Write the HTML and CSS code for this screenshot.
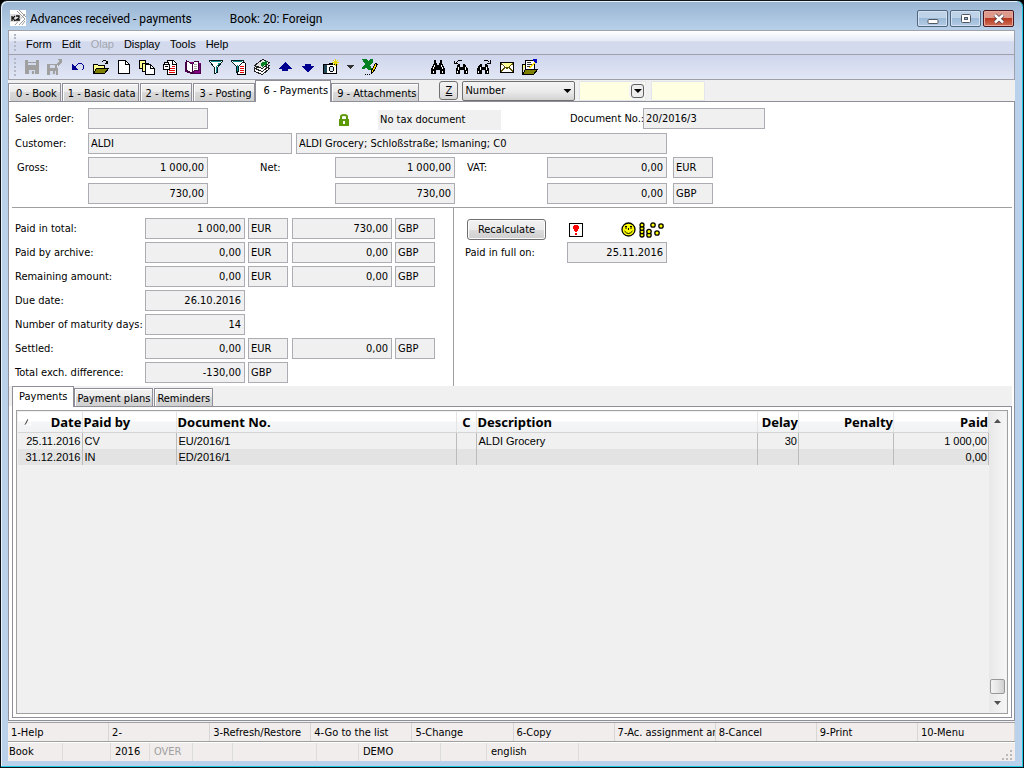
FILE: index.html
```html
<!DOCTYPE html>
<html lang="en">
<head>
<meta charset="utf-8">
<title>Advances received - payments</title>
<link rel="stylesheet" href="styles.css">
</head>
<body>
<div class="window">
  <header class="titlebar">
    <svg class="app-icon" width="16" height="16" viewBox="0 0 16 16"><rect width="16" height="16" fill="#fff"/><path d="M7 1L15 9M9 0L16 7M5 15L15 4M9 15L15 9M12 15l3-4" stroke="#999" stroke-width="1" fill="none"/><path d="M0 4h9l3 4-3 4H0z" fill="#ddd"/><path d="M2 6v5M5 6L3 8l2 3M6 6h3v2L6 10h4" stroke="#111" stroke-width="1.3" fill="none"/></svg>
    <h1 class="title">Advances received - payments</h1>
    <span class="title-book">Book: 20: Foreign</span>
    <div class="win-buttons">
      <button class="win-btn" aria-label="Minimize"><svg width="12" height="12" viewBox="0 0 12 12"><rect x="1" y="6.500" width="10" height="4" rx="1" fill="#fff" stroke="#53575f"/></svg></button>
      <button class="win-btn" aria-label="Maximize"><svg width="12" height="12" viewBox="0 0 12 12"><rect x="1.500" y="1.500" width="9" height="8" rx="1" fill="#fff" stroke="#53575f"/><rect x="4.500" y="4.500" width="3" height="2" fill="#8fb0d0" stroke="#53575f"/></svg></button>
      <button class="win-btn close" aria-label="Close"><svg width="12" height="12" viewBox="0 0 12 12"><path d="M2 2l8 7.500M10 2L2 9.500" stroke="#53404a" stroke-width="4"/><path d="M2 2l8 7.500M10 2L2 9.500" stroke="#fff" stroke-width="2.400"/></svg></button>
    </div>
  </header>

  <div class="client">
    <nav class="menubar">
      <button>Form</button><button>Edit</button><button disabled>Olap</button><button>Display</button><button>Tools</button><button>Help</button>
    </nav>

    <div class="toolbar" role="toolbar">
      <button class="tool" aria-label="Save"><svg viewBox="0 0 16 16"><path d="M1 1h13l1 1v13H1z" fill="#a0a0a0"/><path d="M4 1h8v5H4zM5 11h6v4H5z" fill="#d5dbee"/><path d="M4 3h8v1H4zM8 12h2v3H8z" fill="#a0a0a0"/></svg></button>
      <button class="tool" aria-label="Save and close"><svg viewBox="0 0 16 16"><path d="M0 5h10v4h1v7H0zM10 0h5v5l-1-1-3 3-2-2 3-3z" fill="#a0a0a0"/><path d="M3 6h5v3H3zM3 12h6v4H3z" fill="#d5dbee"/><path d="M6 12h2v3H6z" fill="#a0a0a0"/></svg></button>
      <button class="tool" aria-label="Undo"><svg viewBox="0 0 16 16"><path d="M2 5v6h6z" fill="#000090"/><path d="M4.500 8.500l4-4h3l2 2v3l-2 2" fill="none" stroke="#000090"/></svg></button>
      <button class="tool" aria-label="Open"><svg viewBox="0 0 16 16"><path d="M.5 14.500v-9h4l1 1h6v3" fill="#ffff90" stroke="#000"/><path d="M.5 14.500l3-5h12l-4 5z" fill="#808000" stroke="#000"/><path d="M8.500 3.500l2-2h2l2 3M11.500 4.500h3v-3" fill="none" stroke="#000"/></svg></button>
      <button class="tool" aria-label="New"><svg viewBox="0 0 16 16"><path d="M2.500 1.500h7l4 4v9h-11z" fill="#fff" stroke="#000"/><path d="M9.500 1.500v4h4" fill="none" stroke="#000"/></svg></button>
      <button class="tool" aria-label="Copy record"><svg viewBox="0 0 16 16"><path d="M.5 1.500h6v8h-6z" fill="#ffff90" stroke="#000"/><path d="M3.500 4.500h6v8h-6z" fill="#ffff90" stroke="#000"/><path d="M6.500 5.500h5l4 4v6h-9z" fill="#fff" stroke="#000"/><path d="M11.500 5.500v4h4" fill="none" stroke="#000"/></svg></button>
      <button class="tool" aria-label="Locked document"><svg viewBox="0 0 16 16"><path d="M5.500 1.500h6l3 3v11h-9z" fill="#fff" stroke="#000"/><path d="M10.500 1.500v4h4" fill="none" stroke="#000"/><path d="M10 7.500h3M7 9.500h6M7 11.500h6M7 13.500h6" stroke="#e00000"/><path d="M2.500 5.500v-2h4v2M1.500 5.500h6v5h-6z" fill="#fff" stroke="#000"/><path d="M3 7.500h3" stroke="#000"/></svg></button>
      <button class="tool" aria-label="Book"><svg viewBox="0 0 16 16"><path d="M.5 2.500v10l6 2h9v-10" fill="#800080" stroke="#500050"/><path d="M1.500 1.500l6 4v9l-6-3zM7.500 5.500l2-3h4v9h-4l-2 3z" fill="#fff" stroke="#400040"/><path d="M9 5.500h3M9 7.500h3M9 9.500h3" stroke="#aaa"/></svg></button>
      <button class="tool" aria-label="Filter"><svg viewBox="0 0 16 16"><path d="M1.500 1.500h13v1l-5 6v5l-3 1v-6l-5-6z" fill="#fff" stroke="#002020"/><path d="M3 2.500h10M11.500 4L8.500 8v5" fill="none" stroke="#109090"/></svg></button>
      <button class="tool" aria-label="Filter document"><svg viewBox="0 0 16 16"><path d="M7.500 3.500h6l1 1v11h-8z" fill="#fff" stroke="#000"/><path d="M9 7.500h4M9 9.500h4M9 11.500h4M9 13.500h4" stroke="#e00000"/><path d="M.5 1.500h12v1l-5 5v5l-2 1v-6l-5-5z" fill="#fff" stroke="#002020"/><path d="M2 2.500h9M6.500 6v6" stroke="#109090"/></svg></button>
      <button class="tool" aria-label="Books"><svg viewBox="0 0 16 16"><path d="M.5 10.500l7-5 8 4-7 6-8-3zM.5 8.500l7-5 8 3-7 6-8-3z" fill="#fff" stroke="#222"/><path d="M.5 6.500l8-6 7 3-7 6z" fill="#e4e4e4" stroke="#222"/><path d="M6 4l7-2-1 6-2-2-2 2-2-2 2-1z" fill="#008020"/></svg></button>
      <button class="tool" aria-label="Previous"><svg viewBox="0 0 16 16"><path d="M8 3L1 10h4v2h6v-2h4z" fill="#000090"/></svg></button>
      <button class="tool" aria-label="Next"><svg viewBox="0 0 16 16"><path d="M8 13L1 7h4V5h6v2h4z" fill="#000090"/></svg></button>
      <button class="tool" aria-label="Snapshot"><svg viewBox="0 0 16 16"><path d="M.5 5.500h13v9H.5z" fill="#fff" stroke="#000"/><path d="M1 6h3v8H1z" fill="#204858"/><path d="M6 4h4v1H6z" fill="#000"/><circle cx="8.500" cy="10" r="2.500" fill="#cfe8f0" stroke="#000"/><path d="M12.500 0v7M9 3.500h7M10 1l5 5M15 1l-5 5" stroke="#e8d800"/></svg></button>
      <button class="tool caret" aria-label="Snapshot options"><svg viewBox="0 0 16 16"><path d="M4 6h8l-4 4z" fill="#333"/></svg></button>
      <button class="tool" aria-label="Export to Excel"><svg viewBox="0 0 16 16"><path d="M0 0h5l2 3 1-3h3v3L8 6l3 5H6L4 8l-2 2H0V8l3-3z" fill="#008020"/><path d="M9.500 11.500l4-7 2 1-4 7-2 2z" fill="#ffe000" stroke="#000"/><path d="M3 15.500h1M5 15.500h1M7 15.500h1" stroke="#000"/></svg></button>
      <button class="tool find" aria-label="Find"><svg viewBox="0 0 16 16"><path d="M4 1h2v3h1v2h2V4h1V1h2v3l3 6v5h-5v-4H6v4H1v-5l3-6z" fill="#000"/><path d="M4.500 6l-1 4M11.500 6l1 4M3.500 12v2M12.500 12v2" stroke="#fff"/></svg></button>
      <button class="tool" aria-label="Find previous"><svg viewBox="0 0 16 16"><path d="M5 5h2v3h3V5h2l3 5v5h-4v-4H7v4H3v-5z" fill="#000"/><path d="M5.500 8v3M12.500 8v3M4.500 12v2M13.500 12v2" stroke="#fff"/><path d="M3.500 5V3.500l2-2h3l1 1M1.500 2v2.500h3" stroke="#000" fill="none"/></svg></button>
      <button class="tool" aria-label="Find next"><svg viewBox="0 0 16 16"><path d="M4 5h2v3h3V5h2l2 5v5H9v-4H6v4H1v-5z" fill="#000"/><path d="M4.500 8v3M10.500 8v3M2.500 12v2M11.500 12v2" stroke="#fff"/><path d="M7.500 2.500l1-1h3l2 2M11 4.500h3.500V1" stroke="#000" fill="none"/></svg></button>
      <button class="tool" aria-label="Mail"><svg viewBox="0 0 16 16"><path d="M1.500 3.500h13v10h-13z" fill="#fff" stroke="#000"/><path d="M3 4h10L8 9z" fill="#ffff90"/><path d="M2 4.500l6 5 6-5M2 12.500l4-4M14 12.500l-4-4" fill="none" stroke="#605000"/></svg></button>
      <button class="tool" aria-label="Notes"><svg viewBox="0 0 16 16"><path d="M.5 14.500v-9h3" fill="#ffff80" stroke="#000"/><path d="M3.500 10.500v-9h9v9z" fill="#fff" stroke="#000"/><path d="M5 3.500h4M5 5.500h5M5 7.500h4" stroke="#333"/><path d="M.5 15.500l3-5h12l-4 5z" fill="#808000" stroke="#000"/><path d="M7 9l5-6 1 1-5 5z" fill="#ffe000"/><path d="M11 0h4v4h-2l-2-2z" fill="#0000c0"/></svg></button>
    </div>

    <div class="tabrow">
      <div class="tabs" role="tablist">
        <button class="tab" role="tab">0 - Book</button><button class="tab" role="tab">1 - Basic data</button><button class="tab" role="tab">2 - Items</button><button class="tab" role="tab">3 - Posting</button><button class="tab active" role="tab" aria-selected="true">6 - Payments</button><button class="tab" role="tab">9 - Attachments</button>
      </div>
      <button class="z-btn">Z</button>
      <div class="sort-box"><select aria-label="Sort by"><option>Number</option></select></div>
      <div class="combo"><input type="text" aria-label="Filter from"><button aria-label="Choose value"></button></div>
      <input class="filter-to" type="text" aria-label="Filter to">
    </div>

    <main class="page">
      <section class="summary">
        <div class="line">
          <label class="lead" for="order">Sales order:</label><input class="field w120" id="order" readonly>
          <svg class="lock" width="12" height="14" viewBox="0 0 12 14"><path d="M3 7V3.500Q3 2 6 2t3 1.500V7" fill="none" stroke="#5c9a0a" stroke-width="2"/><rect x="1" y="6" width="10" height="7" fill="#5c9a0a"/><rect x="5" y="8" width="2" height="3" fill="#fff"/></svg>
          <output class="tax">No tax document</output>
          <label class="docno-label" for="docno">Document No.:</label><input class="field docno" id="docno" value="20/2016/3" readonly>
        </div>
        <div class="line customer-line">
          <label class="lead" for="cust">Customer:</label><input class="field customer" id="cust" value="ALDI" readonly><input class="field address" aria-label="Customer address" value="ALDI Grocery; Schloßstraße; Ismaning; C0" readonly>
        </div>
        <div class="line">
          <label class="lead inset" for="gross">Gross:</label><input class="field w120 num" id="gross" value="1 000,00" readonly>
          <label class="net" for="net">Net:</label><input class="field w120 num" id="net" value="1 000,00" readonly>
          <label class="vat" for="vat">VAT:</label><input class="field w120 num" id="vat" value="0,00" readonly><input class="field cur spaced" aria-label="Currency" value="EUR" readonly>
        </div>
        <div class="line home">
          <span class="lead"></span><input class="field w120 num" aria-label="Gross, home currency" value="730,00" readonly>
          <span class="net"></span><input class="field w120 num" aria-label="Net, home currency" value="730,00" readonly>
          <span class="vat"></span><input class="field w120 num" aria-label="VAT, home currency" value="0,00" readonly><input class="field cur spaced" aria-label="Home currency" value="GBP" readonly>
        </div>
      </section>

      <div class="details">
        <section class="totals">
          <label for="t1">Paid in total:</label><input class="field num" id="t1" value="1 000,00" readonly><input class="field" aria-label="Currency" value="EUR" readonly><input class="field num second" aria-label="Paid in total, home" value="730,00" readonly><input class="field" aria-label="Home currency" value="GBP" readonly>
          <label for="t2">Paid by archive:</label><input class="field num" id="t2" value="0,00" readonly><input class="field" aria-label="Currency" value="EUR" readonly><input class="field num second" aria-label="Paid by archive, home" value="0,00" readonly><input class="field" aria-label="Home currency" value="GBP" readonly>
          <label for="t3">Remaining amount:</label><input class="field num" id="t3" value="0,00" readonly><input class="field" aria-label="Currency" value="EUR" readonly><input class="field num second" aria-label="Remaining amount, home" value="0,00" readonly><input class="field" aria-label="Home currency" value="GBP" readonly>
          <label for="t4">Due date:</label><input class="field num" id="t4" value="26.10.2016" readonly>
          <label for="t5">Number of maturity days:</label><input class="field num" id="t5" value="14" readonly>
          <label for="t6">Settled:</label><input class="field num" id="t6" value="0,00" readonly><input class="field" aria-label="Currency" value="EUR" readonly><input class="field num second" aria-label="Settled, home" value="0,00" readonly><input class="field" aria-label="Home currency" value="GBP" readonly>
          <label for="t7">Total exch. difference:</label><input class="field num" id="t7" value="-130,00" readonly><input class="field" aria-label="Home currency" value="GBP" readonly>
        </section>
        <section class="status">
          <div class="status-row">
            <button class="recalc">Recalculate</button>
            <svg class="alert" width="14" height="14" viewBox="0 0 14 14" shape-rendering="crispEdges"><rect x=".5" y=".5" width="13" height="13" fill="#fff" stroke="#000"/><path d="M5 2h4v1h1v3H9v2H8v1H6V8H5V6H4V3h1zM6 10h2v2H6z" fill="#f00"/></svg>
            <svg class="smiley" width="44" height="16" viewBox="0 0 44 16"><g fill="#ff0" stroke="#000" stroke-width="1.300"><circle cx="7.500" cy="7.500" r="6.500"/><circle cx="21" cy="13" r="2"/><circle cx="21" cy="9.700" r="2"/><circle cx="21" cy="6.300" r="2"/><circle cx="21" cy="3" r="2"/><circle cx="28" cy="13" r="2.200"/><circle cx="28" cy="9.500" r="2.200"/><circle cx="32" cy="3" r="2.200"/><circle cx="40" cy="4" r="2.200"/><circle cx="36" cy="11" r="2.200"/></g><path d="M4 4.500h2M9 4.500h2M5 4v3M10 4v3M7.500 6v2M3.500 9q4 5 8 0" fill="none" stroke="#000"/></svg>
          </div>
          <div class="status-row">
            <label class="paid-label" for="paidon">Paid in full on:</label><input class="field num paidon" id="paidon" value="25.11.2016" readonly>
          </div>
        </section>
      </div>

      <div class="subtabs" role="tablist">
        <button class="tab active" role="tab" aria-selected="true">Payments</button><button class="tab" role="tab">Payment plans</button><button class="tab" role="tab">Reminders</button>
      </div>
      <section class="subpanel">
        <div class="listbox">
          <div class="list">
            <table>
              <colgroup><col class="c-date"><col class="c-by"><col class="c-doc"><col class="c-c"><col><col class="c-delay"><col class="c-pen"><col class="c-paid"></colgroup>
              <thead><tr><th class="r"><span class="head-date"><svg width="9" height="8" viewBox="0 0 9 8"><path d="M1 7l3-6" stroke="#333" fill="none"/><path d="M4 1l3 6H1" stroke="#fff" fill="none"/></svg>Date</span></th><th>Paid by</th><th>Document No.</th><th class="mid">C</th><th>Description</th><th class="r">Delay</th><th class="r">Penalty</th><th class="r">Paid</th></tr></thead>
              <tbody>
                <tr><td class="r">25.11.2016</td><td>CV</td><td>EU/2016/1</td><td></td><td>ALDI Grocery</td><td class="r">30</td><td></td><td class="r">1 000,00</td></tr>
                <tr><td class="r">31.12.2016</td><td>IN</td><td>ED/2016/1</td><td></td><td></td><td class="r"></td><td></td><td class="r">0,00</td></tr>
              </tbody>
            </table>
          </div>
          <div class="scroll">
            <button aria-label="Scroll up"><svg width="7" height="4" viewBox="0 0 7 4"><path d="M0 4h7L3.500 0z" fill="#505050"/></svg></button>
            <div class="thumb"></div>
            <button aria-label="Scroll down"><svg width="7" height="4" viewBox="0 0 7 4"><path d="M0 0h7L3.500 4z" fill="#505050"/></svg></button>
          </div>
        </div>
      </section>
    </main>

    <div class="fkeys">
      <button>1-Help</button><button>2-</button><button>3-Refresh/Restore</button><button>4-Go to the list</button><button>5-Change</button><button>6-Copy</button><button>7-Ac. assignment an</button><button>8-Cancel</button><button>9-Print</button><button>10-Menu</button>
    </div>
    <footer class="statusbar">
      <span>Book</span><span></span><span>2016</span><span class="off">OVER</span><span></span><span></span><span></span><span>DEMO</span><span></span><span>english</span><span class="rest"></span>
      <svg class="grip" width="12" height="12" viewBox="0 0 12 12"><path d="M9 1h2v2H9zM5 5h2v2H5zM9 5h2v2H9zM1 9h2v2H1zM5 9h2v2H5zM9 9h2v2H9z" fill="#b8b8b8"/></svg>
    </footer>
  </div>
</div>
</body>
</html>
```

FILE: styles.css
```css
* { box-sizing: border-box; }

html, body { height: 100%; margin: 0; }

body {
  background: #000;
  color: #000;
  font: 11px/14px "DejaVu Sans Condensed", "Noto Sans", sans-serif;
}

button, input, select {
  margin: 0;
  padding: 0;
  border: 0;
  border-radius: 0;
  background: none;
  color: inherit;
  font: inherit;
}

.window {
  display: flex;
  flex-direction: column;
  min-height: 100vh;
  padding: 0 7px 6px 6px;
  border: 1px solid #101418;
  border-radius: 7px 7px 0 0;
  box-shadow: inset 0 -1px 0 #20c8e8, inset -1px 0 0 #20c8e8, inset 1px 1px 0 #e8f2fb;
  background: linear-gradient(#98b4d2 0, #b9d1ea 30px, #b9d1ea 100%);
}

/* Title bar */
.titlebar { display: flex; align-items: flex-start; height: 29px; padding: 0 2px 0 3px; }
.app-icon { margin-top: 9px; }
.title, .title-book { margin: 10px 0 0 4px; font: 12px/17px Roboto, "Noto Sans", sans-serif; }
.title-book { margin-left: 38px; }
.win-buttons { display: flex; gap: 2px; margin: 9px 0 0 auto; }
.win-btn {
  display: flex;
  align-items: center;
  justify-content: center;
  width: 31px;
  height: 17px;
  border: 1px solid #52667e;
  border-radius: 2px;
  box-shadow: inset 0 0 0 1px #d3e2f2;
  background: linear-gradient(#bfd3e8 0 45%, #9bb9d8 50%, #b5cde6);
}
.win-btn.close {
  border-color: #4a1620;
  box-shadow: inset 0 0 0 1px #e8a89c;
  background: linear-gradient(#dd9a8c 0 45%, #b83820 50%, #d07058);
}

.client {
  display: flex;
  flex: 1;
  flex-direction: column;
  margin: 0 1px;
  background: #f0f0f0;
}

/* Menu and tool bars */
.menubar, .toolbar {
  position: relative;
  display: flex;
  align-items: center;
  border: 1px solid #a0a0a8;
}
.menubar { height: 25px; padding: 2px 0 0 9px; background: linear-gradient(#fff, #e4e9f5 45%, #d3daed 46%); }
.toolbar { height: 25px; padding-left: 11px; border-top: 0; background: linear-gradient(#cfd6ec, #e2e7f5); }
.menubar::before, .toolbar::before {
  content: "";
  position: absolute;
  left: 5px;
  top: 3px;
  bottom: 3px;
  border-left: 2px dotted #b4b8c4;
}
.menubar button { padding: 0 7px 0 8px; font: 11px/14px "Liberation Sans", sans-serif; }
.menubar button + button { padding-left: 3px; }
.menubar button:disabled { color: #a4a6ae; }
.tool { display: flex; align-items: center; justify-content: center; width: 23px; height: 23px; }
.tool svg { width: 16px; height: 16px; shape-rendering: crispEdges; }
.tool.caret { width: 16px; }
.tool.find { margin-left: 45px; }

/* Page tabs */
.tabrow { display: flex; align-items: flex-end; height: 22px; border-bottom: 1px solid #8e8f99; }
.tabs, .subtabs { display: flex; align-items: flex-end; }
.tab {
  height: 18px;
  padding: 2px 2px 0;
  border: 1px solid #8e8f99;
  border-bottom: 0;
  box-shadow: inset 1px 1px 0 #fff;
  background: linear-gradient(#f3f3f3, #ebebeb 45%, #dadada 50%, #cfcfcf);
  white-space: nowrap;
}
.tabs .tab { padding: 2px 2px 0 5px; }
.tabs .tab:first-child { padding: 2px 3px 0 7px; }
.tabs .tab + .tab, .subtabs .tab + .tab { margin-left: 1px; }
.tab.active, .tabs .tab.active {
  height: 22px;
  margin: 0 -1px -1px 0;
  background: #fff;
  z-index: 1;
}
.tabs .tab.active { padding: 0 2px 1px 8px; margin-left: 0; }
.z-btn {
  width: 19px;
  height: 19px;
  margin: 0 4px 1px 20px;
  border: 1px solid #707070;
  border-radius: 3px;
  background: linear-gradient(#f4f4f4, #e8e8e8 50%, #d6d6d6);
  text-decoration: underline;
}
.sort-box { position: relative; width: 113px; height: 20px; }
.sort-box select {
  width: 100%;
  height: 20px;
  padding: 0 2px;
  border: 1px solid #707070;
  border-radius: 2px;
  appearance: none;
  background: linear-gradient(#f4f4f4, #ebebeb 50%, #d4d4d4);
}
.sort-box::after, .combo button::after {
  content: "";
  width: 8px;
  height: 4px;
  background: #000;
  clip-path: polygon(0 0, 100% 0, 50% 100%);
}
.sort-box::after { position: absolute; right: 4px; top: 8px; pointer-events: none; }
.combo, .filter-to { height: 20px; margin: 0 0 0 4px; border: 1px solid #e2e6ec; background: #ffffe1; }
.combo { display: flex; align-items: center; width: 67px; padding-right: 1px; }
.combo input { flex: 1; min-width: 0; height: 18px; }
.combo button {
  display: flex;
  align-items: center;
  justify-content: center;
  width: 13px;
  height: 14px;
  border: 1px solid #606060;
  border-radius: 3px;
  background: #eee;
  box-shadow: 0 0 0 2px #f4f4f4;
}
.filter-to { width: 54px; margin-left: 5px; }

/* Form page */
.page {
  display: flex;
  flex: 1;
  flex-direction: column;
  padding: 0 2px 2px 0;
  border: 1px solid #8e8f99;
  border-top: 0;
  background: #fff;
}
.field {
  height: 21px;
  min-width: 0;
  padding: 0 2px;
  border: 1px solid #abadb3;
  background: #f0f0f0;
}
.num { padding-right: 3px; text-align: right; }
.summary {
  display: flex;
  flex-direction: column;
  gap: 3px;
  margin-left: 3px;
  padding: 6px 0 3px 3px;
  border-bottom: 1px solid #a0a0a0;
}
.line { display: flex; align-items: center; height: 21px; }
.line.customer-line { margin-top: 1px; }
.line.home { margin-top: 2px; }
.lead { width: 73px; }
.lead.inset { padding-left: 2px; }
.w120 { width: 120px; }
.lock { margin: 2px 28px 0 130px; }
.tax { width: 123px; height: 20px; margin-top: 2px; padding: 3px 2px; background: #f0f0f0; }
.docno-label { width: 142px; padding-left: 69px; white-space: nowrap; }
.docno { width: 122px; }
.customer { width: 204px; }
.address { width: 371px; margin-left: 4px; }
.net { width: 127px; padding-left: 52px; }
.vat { width: 92px; padding-left: 12px; }
.cur { width: 40px; }
.spaced { margin-left: 6px; }

.details { display: flex; }
.totals {
  display: grid;
  grid-template-columns: 127px 100px 40px 101px 40px;
  gap: 3px;
  align-items: center;
  width: 445px;
  padding: 10px 0 3px 6px;
  border-right: 1px solid #a0a0a0;
}
.totals label { grid-column: 1; white-space: nowrap; }
.second { margin-left: 1px; }
.status { padding: 10px 0 0 11px; }
.status-row { display: flex; align-items: center; height: 23px; }
.recalc {
  width: 79px;
  height: 21px;
  margin-left: 2px;
  border: 1px solid #707070;
  border-radius: 3px;
  box-shadow: inset 0 0 0 1px #fcfcfc;
  background: linear-gradient(#f2f2f2, #ebebeb 50%, #dddddd 51%, #cfcfcf);
}
.alert { margin-left: 23px; }
.smiley { margin-left: 38px; }
.paid-label { width: 102px; }
.paidon { width: 100px; }

/* Lower tabs and list */
.subtabs { height: 20px; padding-left: 3px; background: #f0f0f0; }
.subtabs .tab.active { height: 21px; padding: 0 6px 1px; margin-left: 0; }
.subpanel {
  display: flex;
  flex: 1;
  margin-left: 3px;
  padding: 3px;
  border: 1px solid #8e8f99;
}
.listbox { display: flex; flex: 1; padding: 1px; border: 1px solid #a0a0a0; background: #f0f0f0; }
.list { flex: 1; }
table { width: 100%; border-collapse: collapse; table-layout: fixed; }
.c-date { width: 64px; }
.c-by { width: 94px; }
.c-doc { width: 280px; }
.c-c { width: 20px; }
.c-delay { width: 41px; }
.c-pen { width: 95px; }
.c-paid { width: 95px; }
th, td { overflow: hidden; text-align: left; white-space: nowrap; }
th {
  height: 20px;
  padding: 1px 0 0 1px;
  border-right: 1px solid #e4e4e4;
  border-bottom: 1px solid #d5d5d5;
  background: linear-gradient(#fff 45%, #f4f5f7 50%, #f1f2f4);
  font: bold 13px/15px "Noto Sans", sans-serif;
}
td {
  height: 16px;
  padding: 0 1px 0 2px;
  border-right: 1px solid #bcbcbc;
  font: 11px/16px "Liberation Sans", sans-serif;
}
tbody tr:nth-child(2) { background: #e3e3e3; }
.r { text-align: right; }
.mid { text-align: center; }
.head-date { display: flex; align-items: center; justify-content: space-between; padding-left: 5px; }
.scroll { display: flex; flex-direction: column; align-items: center; width: 17px; background: linear-gradient(90deg, #e8e8e8, #f6f6f6); }
.scroll button { display: flex; align-items: center; justify-content: center; width: 15px; height: 18px; }
.thumb {
  width: 15px;
  height: 15px;
  margin-top: auto;
  border: 1px solid #989898;
  border-radius: 2px;
  background: linear-gradient(90deg, #f4f4f4, #e6e6e6 50%, #cfcfcf);
}

/* Function keys and status bar */
.fkeys {
  display: grid;
  grid-template-columns: repeat(9, 101fr) 97fr;
  height: 20px;
  margin-top: 1px;
  border-top: 1px solid #a0a0a0;
  border-bottom: 1px solid #a0a0a0;
  background: #f0edec;
}
.fkeys button {
  min-width: 0;
  overflow: hidden;
  padding: 2px 0 0 3px;
  border-right: 1px solid #d6d6d6;
  text-align: left;
  white-space: nowrap;
}
.statusbar { display: grid; grid-template-columns: 55px 48px 39px 43px 40px 84px 42px 82px 46px 92px 1fr 14px; height: 19px; border-top: 1px solid #fff; background: #f0edec; }
.statusbar span { padding: 2px 0 0 4px; border-right: 1px solid #dcdcdc; }
.statusbar span:first-child { padding-left: 1px; }
.statusbar .off { color: #a0a0a0; }
.statusbar .rest { border-right: 0; }
.grip { align-self: end; }
```
